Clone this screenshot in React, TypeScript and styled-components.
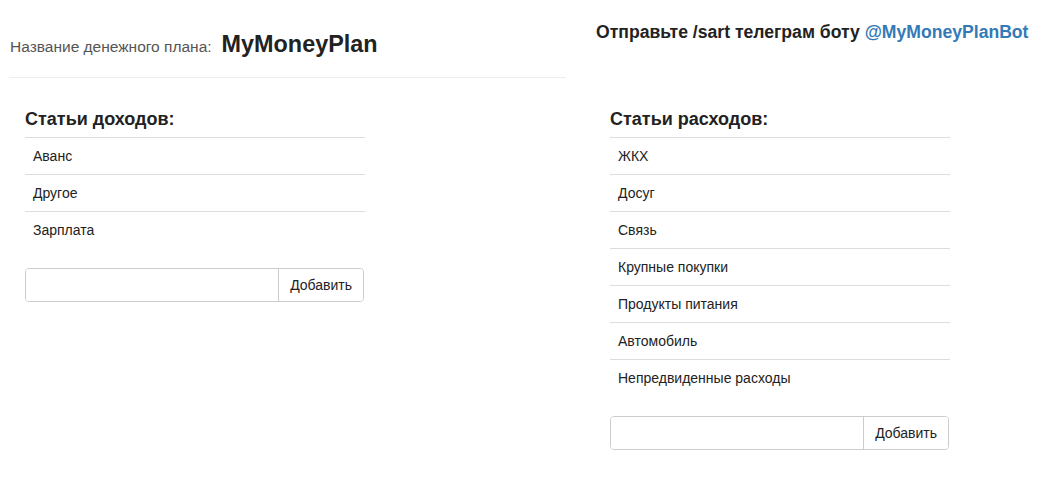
import React, { FC } from 'react';
import styled, { createGlobalStyle } from 'styled-components';

const GlobalStyle = createGlobalStyle`
  html, body {
    margin: 0;
    padding: 0;
    background: #fff;
  }

  body {
    color: #333;
    font-family: "Liberation Sans", Arial, sans-serif;
    font-size: 14px;
    line-height: 20px;
  }
`;

const TopRow = styled.div`
  display: grid;
  grid-template-columns: 566px 1fr;
`;

const PlanTitle = styled.div`
  align-items: baseline;
  border-bottom: 1px solid #eee;
  display: flex;
  gap: 10px;
  margin-left: 9px;
  padding: 31px 0 19px 1px;
`;

const PlanLabel = styled.span`
  color: #555;
  font-size: 15.5px;
`;

const PlanName = styled.span`
  color: #222;
  font-size: 23.4px;
  font-weight: bold;
  line-height: 27px;
`;

const BotNote = styled.div`
  color: #222;
  font-size: 17.6px;
  font-weight: bold;
  padding: 22px 0 0 30px;

  & a {
    color: #337ab7;
    text-decoration: none;
  }
`;

const Columns = styled.div`
  display: grid;
  grid-template-columns: 340px 340px;
  column-gap: 245px;
  margin-top: 31px;
  padding-left: 25px;
`;

const Section = styled.section`
  display: flex;
  flex-direction: column;
`;

const SectionTitle = styled.h3`
  color: #222;
  font-size: 18px;
  font-weight: bold;
  line-height: 20px;
  margin: 0 0 8px;
`;

const ItemList = styled.ul`
  list-style: none;
  margin: 0;
  padding: 0;
`;

const Item = styled.li`
  border-top: 1px solid #ddd;
  color: #222;
  padding: 8px;
`;

const InputGroup = styled.div`
  border: 1px solid #ccc;
  border-radius: 4px;
  display: flex;
  height: 32px;
  margin-top: 20px;
  margin-right: 1px;
  overflow: hidden;
`;

const TextInput = styled.input`
  border: none;
  flex: 1;
  font: inherit;
  min-width: 0;
  outline: none;
  padding: 6px 12px;
`;

const AddButton = styled.button`
  background: #fff;
  border: none;
  border-left: 1px solid #ccc;
  color: #222;
  cursor: pointer;
  font: inherit;
  padding: 0 11px;
`;

const CategoryBlock: FC<{ title: string; items: string[] }> = (props) => (
  <Section>
    <SectionTitle>{props.title}</SectionTitle>
    <ItemList>
      {props.items.map((item) => (
        <Item key={item}>{item}</Item>
      ))}
    </ItemList>
    <InputGroup>
      <TextInput type="text" />
      <AddButton type="button">Добавить</AddButton>
    </InputGroup>
  </Section>
);

const incomes = ['Аванс', 'Другое', 'Зарплата'];

const expenses = [
  'ЖКХ',
  'Досуг',
  'Связь',
  'Крупные покупки',
  'Продукты питания',
  'Автомобиль',
  'Непредвиденные расходы',
];

const App: FC = () => (
  <>
    <GlobalStyle />
    <TopRow>
      <PlanTitle>
        <PlanLabel>Название денежного плана:</PlanLabel>
        <PlanName>MyMoneyPlan</PlanName>
      </PlanTitle>
      <BotNote>
        {'Отправьте /sart телеграм боту '}
        <a href="#bot">@MyMoneyPlanBot</a>
      </BotNote>
    </TopRow>
    <Columns>
      <CategoryBlock title="Статьи доходов:" items={incomes} />
      <CategoryBlock title="Статьи расходов:" items={expenses} />
    </Columns>
  </>
);

export default App;
